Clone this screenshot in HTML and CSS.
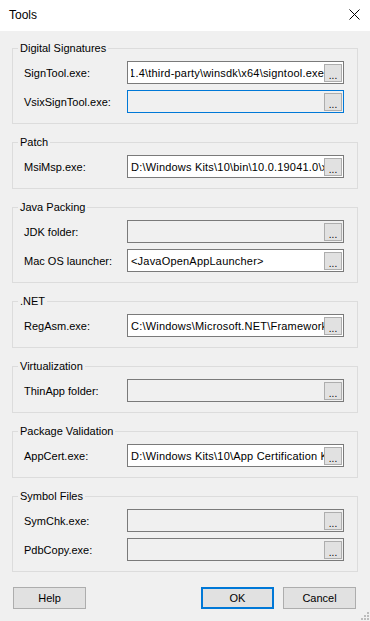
FILE: index.html
```html
<!DOCTYPE html>
<html lang="en">
<head>
    <meta charset="UTF-8">
    <title>Tools</title>
    <link rel="stylesheet" href="styles.css">
</head>
<body>
    <div class="window">
        <div class="titlebar">
            <span class="title">Tools</span>
            <svg class="close" width="11" height="11" viewBox="0 0 11 11">
                <path d="M0.5 0.5 L10.5 10.5 M10.5 0.5 L0.5 10.5" stroke="#000" stroke-width="1" fill="none"/>
            </svg>
        </div>

        <div class="content">
            <fieldset class="group">
                <legend>Digital Signatures</legend>
                <div class="row">
                    <label>SignTool.exe:</label>
                    <div class="field filled">
                        <span class="value end"><span>C:\Program Files (x86)\Caphyon\Advanced Installer 21.4\third-party\winsdk\x64\signtool.exe</span></span>
                        <button class="browse">...</button>
                    </div>
                </div>
                <div class="row">
                    <label>VsixSignTool.exe:</label>
                    <div class="field focused">
                        <span class="value"></span>
                        <button class="browse">...</button>
                    </div>
                </div>
            </fieldset>

            <fieldset class="group">
                <legend>Patch</legend>
                <div class="row">
                    <label>MsiMsp.exe:</label>
                    <div class="field filled">
                        <span class="value">D:\Windows Kits\10\bin\10.0.19041.0\x86\MsiMsp.exe</span>
                        <button class="browse">...</button>
                    </div>
                </div>
            </fieldset>

            <fieldset class="group">
                <legend>Java Packing</legend>
                <div class="row">
                    <label>JDK folder:</label>
                    <div class="field">
                        <span class="value"></span>
                        <button class="browse">...</button>
                    </div>
                </div>
                <div class="row">
                    <label>Mac OS launcher:</label>
                    <div class="field filled">
                        <span class="value">&lt;JavaOpenAppLauncher&gt;</span>
                        <button class="browse">...</button>
                    </div>
                </div>
            </fieldset>

            <fieldset class="group">
                <legend>.NET</legend>
                <div class="row">
                    <label>RegAsm.exe:</label>
                    <div class="field filled">
                        <span class="value">C:\Windows\Microsoft.NET\Framework\v4.0.30319\RegAsm.exe</span>
                        <button class="browse">...</button>
                    </div>
                </div>
            </fieldset>

            <fieldset class="group">
                <legend>Virtualization</legend>
                <div class="row">
                    <label>ThinApp folder:</label>
                    <div class="field">
                        <span class="value"></span>
                        <button class="browse">...</button>
                    </div>
                </div>
            </fieldset>

            <fieldset class="group">
                <legend>Package Validation</legend>
                <div class="row">
                    <label>AppCert.exe:</label>
                    <div class="field filled">
                        <span class="value">D:\Windows Kits\10\App Certification Kit\appcert.exe</span>
                        <button class="browse">...</button>
                    </div>
                </div>
            </fieldset>

            <fieldset class="group">
                <legend>Symbol Files</legend>
                <div class="row">
                    <label>SymChk.exe:</label>
                    <div class="field">
                        <span class="value"></span>
                        <button class="browse">...</button>
                    </div>
                </div>
                <div class="row">
                    <label>PdbCopy.exe:</label>
                    <div class="field">
                        <span class="value"></span>
                        <button class="browse">...</button>
                    </div>
                </div>
            </fieldset>

            <div class="buttons">
                <button class="btn">Help</button>
                <div class="right">
                    <button class="btn default">OK</button>
                    <button class="btn">Cancel</button>
                </div>
            </div>
        </div>

        <svg class="grip" width="9" height="9" viewBox="0 0 9 9">
            <rect x="7" y="1" width="2" height="2" fill="#bcbcbc"/>
            <rect x="4" y="4" width="2" height="2" fill="#bcbcbc"/>
            <rect x="7" y="4" width="2" height="2" fill="#bcbcbc"/>
            <rect x="1" y="7" width="2" height="2" fill="#bcbcbc"/>
            <rect x="4" y="7" width="2" height="2" fill="#bcbcbc"/>
            <rect x="7" y="7" width="2" height="2" fill="#bcbcbc"/>
        </svg>
    </div>
</body>
</html>
```

FILE: styles.css
```css
/* Dialog */
body {
    margin: 0;
    background-color: #f0f0f0;
    font-family: "Liberation Sans", Arial, sans-serif;
    font-size: 11px;
    color: #000;
}
.window {
    position: relative;
    width: 370px;
    height: 621px;
    overflow: hidden;
}
.titlebar {
    height: 31px;
    background-color: #fff;
    display: flex;
    align-items: center;
    justify-content: space-between;
    padding: 0 10px 0 9px;
}
.title {
    font-size: 12px;
    margin-top: -1px;
}
.close {
    display: block;
    margin-top: -2px;
}
.content {
    padding: 11px 12px 0 12px;
}

/* Group boxes */
.group {
    margin: 0 0 12px 0;
    min-width: 0;
    border: 1px solid #dcdcdc;
    padding: 6px 13px 10px 11px;
}
.group legend {
    margin-left: -6px;
    padding: 0 2px;
    line-height: 13px;
}
.row {
    display: flex;
    align-items: center;
    height: 23px;
    margin-bottom: 6px;
}
.row:last-child {
    margin-bottom: 0;
}
.row label {
    width: 103px;
    flex-shrink: 0;
}

/* Path fields */
.field {
    flex: 1;
    min-width: 0;
    height: 23px;
    box-sizing: border-box;
    border: 1px solid #7a7a7a;
    background-color: #f0f0f0;
    display: flex;
    align-items: center;
    padding: 0 1px 0 3px;
    overflow: hidden;
}
.field.filled {
    background-color: #fff;
}
.field.focused {
    border-color: #0078d7;
}
.value {
    flex: 1;
    min-width: 0;
    white-space: nowrap;
    overflow: hidden;
    letter-spacing: 0.2px;
}
.value.end {
    display: flex;
    justify-content: flex-end;
}
.value.end span {
    flex-shrink: 0;
}
.browse {
    width: 18px;
    height: 18px;
    flex-shrink: 0;
    box-sizing: border-box;
    border: 1px solid #adadad;
    background-color: #e1e1e1;
    font-family: "Liberation Sans", Arial, sans-serif;
    font-size: 10px;
    line-height: 16px;
    padding: 3px 0 0 0;
    color: #000;
}

/* Bottom buttons */
.buttons {
    display: flex;
    justify-content: space-between;
    margin-top: 15px;
    padding: 0 2px 0 1px;
}
.right {
    display: flex;
    gap: 9px;
}
.btn {
    width: 73px;
    height: 22px;
    box-sizing: border-box;
    border: 1px solid #adadad;
    background-color: #e1e1e1;
    font-family: "Liberation Sans", Arial, sans-serif;
    font-size: 11px;
    color: #000;
    padding: 0;
}
.btn.default {
    border: 2px solid #0078d7;
}
.grip {
    position: absolute;
    right: 1px;
    bottom: 1px;
}
```
